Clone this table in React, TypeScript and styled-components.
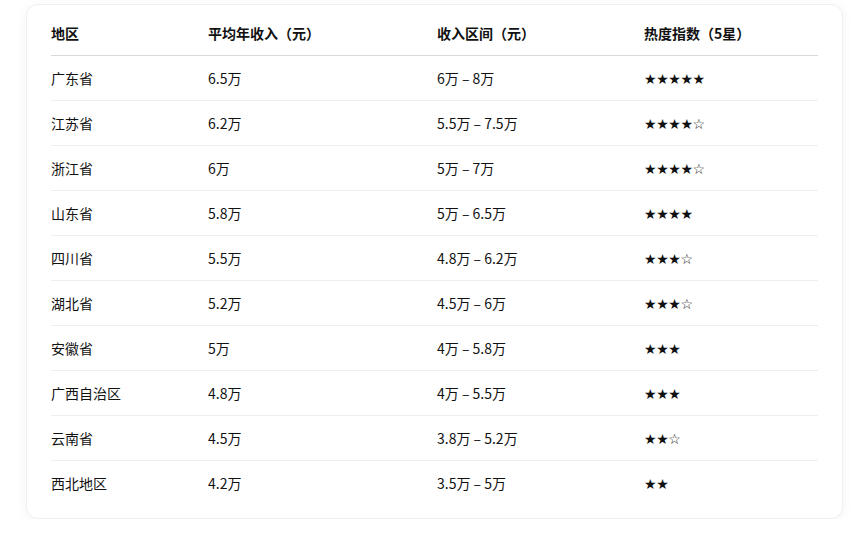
import React from "react";
import styled, { createGlobalStyle } from "styled-components";

const Global = createGlobalStyle`
  html, body { margin: 0; padding: 0; background: #ffffff; }
  body { font-family: "Noto Sans CJK SC", "Noto Sans", sans-serif; color: #111; }
`;

const Page = styled.div`
  padding: 4px 23px 0 26px;
`;

const Card = styled.div`
  background: #fff;
  border: 1px solid #efefef;
  border-radius: 12px;
  box-shadow: 0 2px 12px rgba(0, 0, 0, 0.05);
  padding: 5px 24px 13px;
`;

const Table = styled.table`
  width: 100%;
  border-collapse: collapse;
  table-layout: fixed;
  font-size: 14px;
  line-height: 20px;
  font-family: "Noto Sans CJK SC", "Noto Sans", sans-serif;
`;

const Th = styled.th<{ $w: number }>`
  width: ${(p) => p.$w}px;
  text-align: left;
  font-weight: 700;
  height: 45px;
  padding: 0;
  vertical-align: middle;
  border-bottom: 1px solid #d9d9d9;
  color: #111;
`;

const Tr = styled.tr`
  & + & td { border-top: 1px solid #eeeeee; }
`;

const Td = styled.td`
  height: 44px;
  padding: 0;
  vertical-align: middle;
  color: #111;
`;

const Stars = styled.span`
  font-family: "DejaVu Sans", sans-serif;
  font-size: 14px;
  line-height: 20px;
  letter-spacing: -0.4px;
`;

const rows: [string, string, string, string][] = [
  ["广东省", "6.5万", "6万 – 8万", "★★★★★"],
  ["江苏省", "6.2万", "5.5万 – 7.5万", "★★★★☆"],
  ["浙江省", "6万", "5万 – 7万", "★★★★☆"],
  ["山东省", "5.8万", "5万 – 6.5万", "★★★★"],
  ["四川省", "5.5万", "4.8万 – 6.2万", "★★★☆"],
  ["湖北省", "5.2万", "4.5万 – 6万", "★★★☆"],
  ["安徽省", "5万", "4万 – 5.8万", "★★★"],
  ["广西自治区", "4.8万", "4万 – 5.5万", "★★★"],
  ["云南省", "4.5万", "3.8万 – 5.2万", "★★☆"],
  ["西北地区", "4.2万", "3.5万 – 5万", "★★"],
];

export default function App() {
  return (
    <>
      <Global />
      <Page>
        <Card>
          <Table>
            <thead>
              <tr>
                <Th $w={157}>地区</Th>
                <Th $w={229}>平均年收入（元）</Th>
                <Th $w={207}>收入区间（元）</Th>
                <Th $w={174}>热度指数（5星）</Th>
              </tr>
            </thead>
            <tbody>
              {rows.map((r) => (
                <Tr key={r[0]}>
                  <Td>{r[0]}</Td>
                  <Td>{r[1]}</Td>
                  <Td>{r[2]}</Td>
                  <Td>
                    <Stars>{r[3]}</Stars>
                  </Td>
                </Tr>
              ))}
            </tbody>
          </Table>
        </Card>
      </Page>
    </>
  );
}
